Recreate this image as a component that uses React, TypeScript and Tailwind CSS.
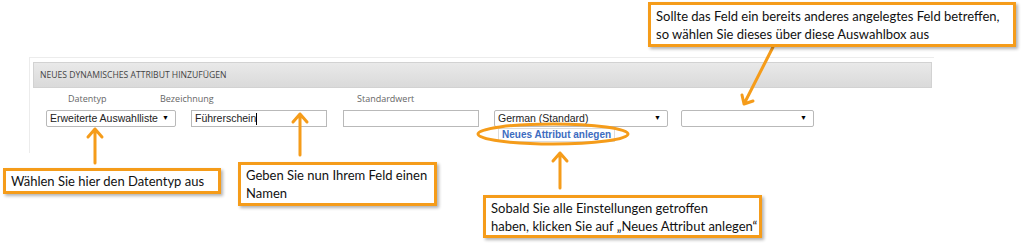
import React from 'react';

const ORANGE = '#f59c1a';

const Callout: React.FC<{ className: string; children: React.ReactNode }> = ({ className, children }) => (
  <div
    className={`absolute bg-white border-[3px] border-[#f59c1a] px-[5px] text-[13px] leading-[18px] text-[#111] whitespace-nowrap shadow-[2px_2px_3px_rgba(0,0,0,0.3)] flex flex-col justify-center ${className}`}
    style={{ fontFamily: 'Lato, "Open Sans", sans-serif' }}
  >
    {children}
  </div>
);

const SelectBox: React.FC<{ width: string; text?: string }> = ({ width, text }) => (
  <div className={`${width} h-[17px] border border-[#b9b9b9] rounded-[2px] bg-white flex items-center justify-between pl-[3px] pr-[6px] text-[10.5px] text-[#222]`}>
    <span>{text}</span>
    <span className="text-[7px] text-black">▼</span>
  </div>
);

const App: React.FC = () => {
  return (
    <div className="relative w-[1024px] h-[248px] overflow-hidden bg-white" style={{ fontFamily: '"Liberation Sans", Arial, sans-serif' }}>
      {/* panel */}
      <div className="ml-[29px] mt-[57px] w-[905px] h-[96px] border-l border-t border-[#ececec] pt-[4px] pl-[3px]">
        <div
          className="h-[26px] w-[899px] border border-[#d2d2d2] bg-gradient-to-b from-[#e9e9e9] to-[#dadada] flex items-center pl-[6px] text-[8.6px] text-[#444] uppercase"
          style={{ fontFamily: '"Open Sans", sans-serif' }}
        >
          Neues dynamisches Attribut hinzufügen
        </div>

        <div className="flex h-[22px] items-center text-[9px] text-[#666]" style={{ fontFamily: '"Open Sans", sans-serif' }}>
          <span className="ml-[35px] w-[92px]">Datentyp</span>
          <span className="w-[197px]">Bezeichnung</span>
          <span>Standardwert</span>
        </div>

        <div className="flex items-center pl-[13px]">
          <SelectBox width="w-[130px]" text="Erweiterte Auswahlliste" />
          <div className="ml-[15px] w-[136px] h-[17px] border border-[#b9b9b9] bg-white flex items-center pl-[3px] text-[10.5px] text-[#222]">
            Führerschein<span className="w-px h-[12px] bg-black" />
          </div>
          <div className="ml-[16px] w-[136px] h-[17px] border border-[#b9b9b9] bg-white" />
          <div className="ml-[15px] flex flex-col">
            <SelectBox width="w-[174px]" text="German (Standard)" />
          </div>
          <div className="ml-[13px]">
            <SelectBox width="w-[133px]" />
          </div>
        </div>

        <div className="flex pl-[465px] pt-[1px]">
          <span className="border border-[#dcdcdc] px-[3px] text-[10px] leading-[12px] font-bold text-[#3d6cc0]">
            Neues Attribut anlegen
          </span>
        </div>
      </div>

      {/* arrows & highlight */}
      <svg className="absolute inset-0 pointer-events-none" width="1024" height="248" viewBox="0 0 1024 248">
        <g fill="none" stroke={ORANGE} strokeWidth="3" strokeLinecap="round" strokeLinejoin="round">
          <ellipse cx="553" cy="134" rx="75" ry="10" />
          <path d="M95 163 V129 M88 137 L95 129 L102 137" />
          <path d="M300 155 V114 M293 122 L300 114 L307 122" />
          <path d="M560 188 V153 M553 161 L560 153 L567 161" />
          <path d="M773 47 L744 104 M742 95 L744 104 L753 101" />
        </g>
      </svg>

      <Callout className="left-[3px] top-[168px] w-[218px] h-[26px]">
        <span>Wählen Sie hier den Datentyp aus</span>
      </Callout>
      <Callout className="left-[238px] top-[162px] w-[199px] h-[44px]">
        <span>Geben Sie nun Ihrem Feld einen</span>
        <span>Namen</span>
      </Callout>
      <Callout className="left-[483px] top-[195px] w-[279px] h-[43px]">
        <span>Sobald Sie alle Einstellungen getroffen</span>
        <span>haben, klicken Sie auf „Neues Attribut anlegen“</span>
      </Callout>
      <Callout className="left-[648px] top-[2px] w-[368px] h-[45px]">
        <span>Sollte das Feld ein bereits anderes angelegtes Feld betreffen,</span>
        <span>so wählen Sie dieses über diese Auswahlbox aus</span>
      </Callout>
    </div>
  );
};

export default App;
